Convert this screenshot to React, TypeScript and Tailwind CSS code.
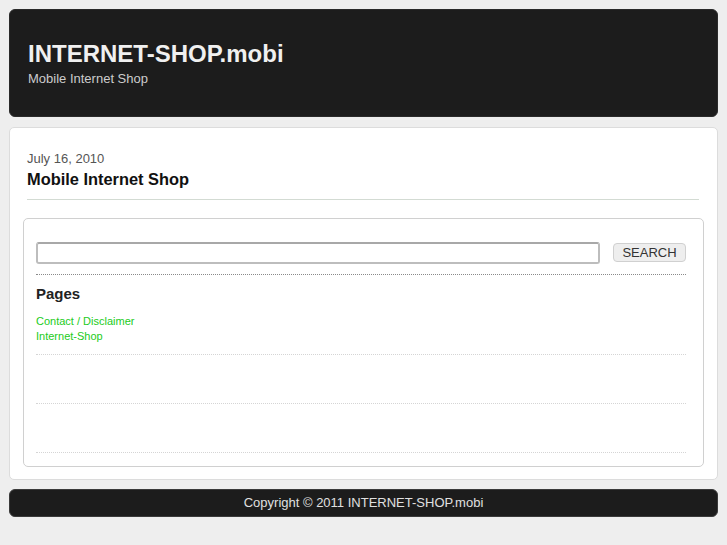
import React from "react";

export default function App() {
  const font = { fontFamily: '"Liberation Sans", Arial, sans-serif' };
  return (
    <div className="min-h-[545px] bg-[#eeeeee] px-[9px] pt-[9px] pb-[20px]" style={font}>
      <header className="h-[108px] rounded-[6px] bg-[#1c1c1c] border border-[#2a2a2a] pl-[18px] pt-[30px]">
        <h1 className="text-[24px] leading-[28px] font-bold text-[#f0f0f0]">INTERNET-SHOP.mobi</h1>
        <p className="mt-[3px] text-[13px] leading-[16px] text-[#cccccc]">Mobile Internet Shop</p>
      </header>

      <main className="mt-[10px] rounded-[5px] border border-[#dcdcdc] bg-white pt-[23px] px-[13px] pb-[12px]">
        <div className="pl-[4px] pr-[5px]">
          <div className="text-[13px] leading-[16px] text-[#555555]">July 16, 2010</div>
          <h2 className="mt-[2px] text-[16.4px] leading-[20px] font-bold text-[#111111]">Mobile Internet Shop</h2>
          <div className="mt-[10px] h-px bg-[#d3dbd3]" />
        </div>

        <aside className="mt-[18px] rounded-[5px] border border-[#d0d0d0] bg-white pt-[23px] pl-[12px] pr-[17px] pb-[13px]">
          <div className="flex items-start">
            <input
              type="text"
              className="flex-1 h-[22px] rounded-[3px] border-2 border-[#bdbdbd] border-t-[#a8a8a8] bg-white outline-none"
            />
            <button className="ml-[13px] mt-[1px] h-[19px] w-[73px] rounded-[4px] border border-[#d0d0d0] bg-[#eeeeee] text-[13px] leading-[17px] text-[#333333]">
              SEARCH
            </button>
          </div>
          <div className="mt-[10px] border-b border-dotted border-[#8a8a8a]" />

          <h3 className="mt-[10px] text-[15px] leading-[18px] font-bold text-[#222222]">Pages</h3>
          <ul className="mt-[11px] text-[11px] leading-[15px]">
            <li><a className="text-[#22cc22]">Contact / Disclaimer</a></li>
            <li><a className="text-[#22cc22]">Internet-Shop</a></li>
          </ul>
          <div className="mt-[10px] border-b border-dotted border-[#d5d5d5]" />
          <div className="h-[49px] border-b border-dotted border-[#d5d5d5]" />
          <div className="h-[49px] border-b border-dotted border-[#d5d5d5]" />
        </aside>
      </main>

      <footer className="mt-[9px] h-[28px] rounded-[6px] bg-[#1c1c1c] border border-[#3a3a3a] flex items-center justify-center">
        <span className="text-[13px] text-[#e0e0e0]">Copyright © 2011 INTERNET-SHOP.mobi</span>
      </footer>
    </div>
  );
}
